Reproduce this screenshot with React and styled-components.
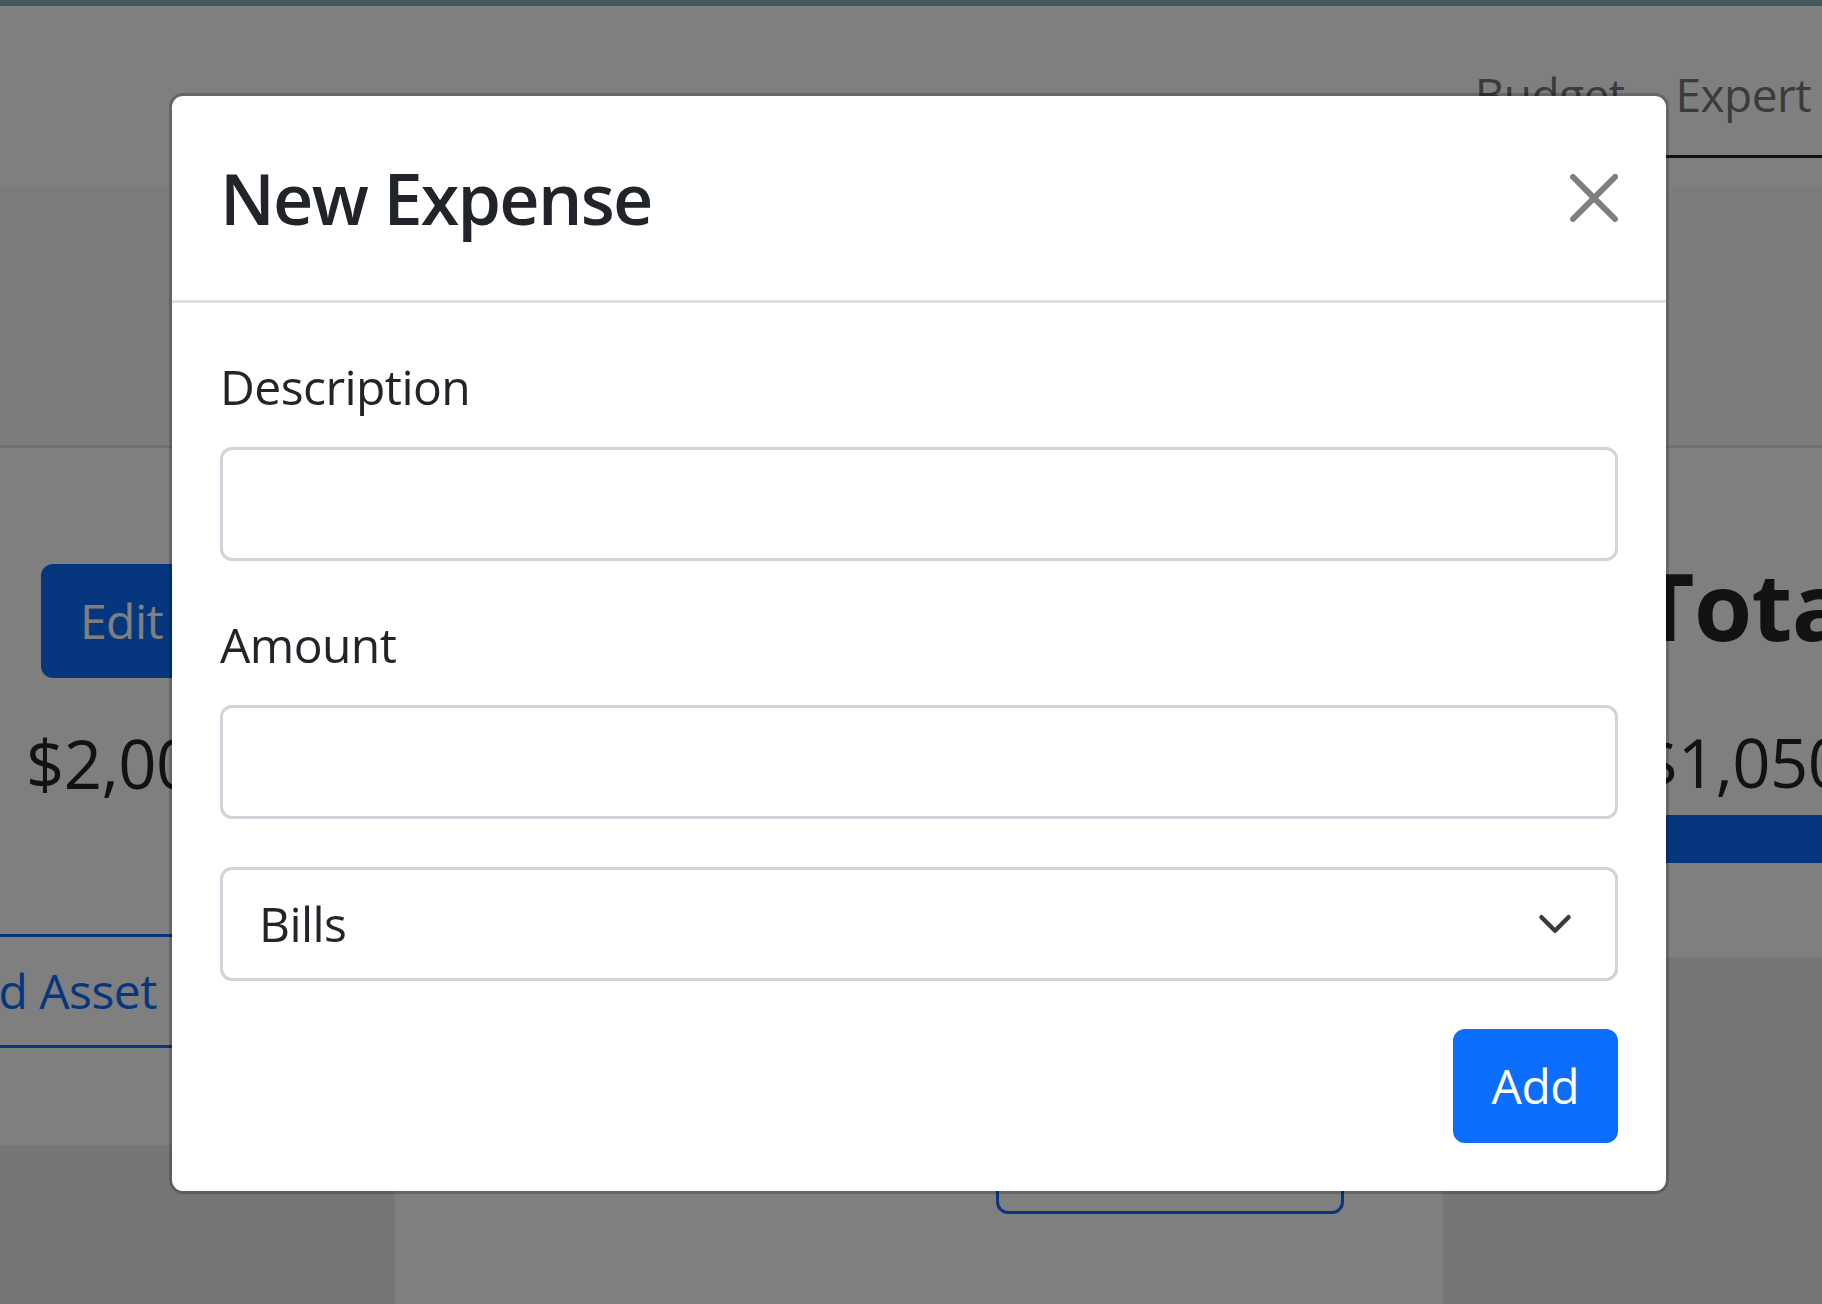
import React from "react";
import styled, { createGlobalStyle } from "styled-components";

const GlobalStyle = createGlobalStyle`
  html, body { margin: 0; padding: 0; }
  body {
    font-family: "Open Sans", "Noto Sans", sans-serif;
    background: #ececec;
    color: #212529;
    overflow: hidden;
    letter-spacing: -0.035em;
  }
  *, *::before, *::after { box-sizing: border-box; }
`;

/* ---------- background page ---------- */
const Page = styled.div`
  width: 1822px;
  height: 1304px;
  display: flex;
  flex-direction: column;
  overflow: hidden;
  background: #ececec;
`;

const TopStrip = styled.div`
  flex: none;
  height: 6px;
  background: #8aacbe;
`;

const Header = styled.header`
  flex: none;
  height: 180px;
  background: #fff;
  display: flex;
  justify-content: flex-end;
  align-items: flex-start;
`;

const Tabs = styled.nav`
  margin-top: 52px;
  display: flex;
  gap: 51px;
  padding: 0 11px 25px 0;
  border-bottom: 3px solid #222;
`;

const Tab = styled.a`
  font-size: 46px;
  line-height: 72px;
  color: #777;
  text-decoration: none;
`;

const Band = styled.div`
  flex: none;
  height: 262px;
  background: #f8f9fa;
  border-bottom: 3px solid #dedede;
`;

const Main = styled.main`
  flex: 1;
  display: grid;
  grid-template-columns: 395px 1048px 1fr;
  align-items: start;
`;

const Card = styled.section`
  background: #fff;
  height: ${(p) => p.$h}px;
  display: flex;
  flex-direction: column;
  align-items: flex-start;
  padding: ${(p) => p.$pad};
`;

const Btn = styled.button`
  font-family: inherit;
  letter-spacing: inherit;
  font-size: 48px;
  line-height: 72px;
  padding: 18px 36px;
  border-radius: 12px;
  border: 3px solid #0d6efd;
  background: ${(p) => (p.$outline ? "transparent" : "#0d6efd")};
  color: ${(p) => (p.$outline ? "#0d6efd" : "#fff")};
  white-space: nowrap;
  cursor: pointer;
  flex: none;
  margin: ${(p) => p.$m || "0"};
  ${(p) => (p.$w ? `width: ${p.$w}px;` : "")}
`;

const Money = styled.div`
  font-size: 67px;
  line-height: 88px;
  color: #212529;
  white-space: nowrap;
  margin: ${(p) => p.$m || "0"};
`;

const BigHeading = styled.h2`
  margin: 0;
  font-size: 94px;
  line-height: 113px;
  font-weight: 700;
  color: #212529;
  white-space: nowrap;
`;

const Progress = styled.div`
  align-self: stretch;
  margin: 9px -40px 0 0;
  height: 48px;
  background: #0d6efd;
`;

/* ---------- modal ---------- */
const Backdrop = styled.div`
  position: fixed;
  inset: 0;
  background: rgba(0, 0, 0, 0.5);
`;

const ModalLayer = styled.div`
  position: fixed;
  inset: 0;
  display: flex;
  align-items: flex-start;
  padding: 93px 0 0 169px;
`;

const Dialog = styled.div`
  flex: none;
  width: 1500px;
  background: #fff;
  background-clip: padding-box;
  border: 3px solid rgba(0, 0, 0, 0.2);
  border-radius: 14px;
  display: flex;
  flex-direction: column;
`;

const ModalHeader = styled.div`
  display: flex;
  align-items: center;
  justify-content: space-between;
  padding: 48px;
  border-bottom: 3px solid #dee2e6;
`;

const Title = styled.div`
  margin: 0;
  font-size: 70px;
  line-height: 108px;
  font-weight: 600;
  letter-spacing: -0.025em;
  color: #212529;
`;

const CloseButton = styled.button`
  box-sizing: content-box;
  width: 48px;
  height: 48px;
  padding: 24px;
  margin: -24px -24px -24px auto;
  border: 0;
  background: transparent;
  opacity: 0.5;
  display: flex;
  align-items: center;
  justify-content: center;
  cursor: pointer;
`;

const ModalBody = styled.div`
  padding: 48px;
`;

const Group = styled.div`
  margin-bottom: 48px;
`;

const Label = styled.label`
  display: block;
  margin-bottom: 24px;
  font-size: 48px;
  line-height: 72px;
  color: #212529;
`;

const Input = styled.input`
  display: block;
  width: 100%;
  height: 114px;
  padding: 18px 36px;
  font-family: inherit;
  letter-spacing: inherit;
  font-size: 48px;
  line-height: 72px;
  color: #212529;
  background: #fff;
  border: 3px solid #ced4da;
  border-radius: 12px;
  outline: none;
`;

const SelectWrap = styled.div`
  position: relative;
`;

const Select = styled.select`
  display: block;
  width: 100%;
  height: 114px;
  padding: 18px 108px 18px 36px;
  font-family: inherit;
  letter-spacing: inherit;
  font-size: 48px;
  line-height: 72px;
  color: #212529;
  background: #fff;
  border: 3px solid #ced4da;
  border-radius: 12px;
  outline: none;
  appearance: none;
  -webkit-appearance: none;
`;

const Chevron = styled.svg`
  position: absolute;
  right: 39px;
  top: 50%;
  transform: translateY(-50%);
  width: 48px;
  height: 36px;
  pointer-events: none;
`;

const Actions = styled.div`
  display: flex;
  justify-content: flex-end;
`;

export default function App() {
  return (
    <>
      <GlobalStyle />
      <Page>
        <TopStrip />
        <Header>
          <Tabs>
            <Tab>Budget</Tab>
            <Tab>Expert</Tab>
          </Tabs>
        </Header>
        <Band />
        <Main>
          <Card $h={697} $pad="116px 0 0 41px">
            <Btn>Edit</Btn>
            <Money $m="41px 0 0 -15px">$2,000</Money>
            <Btn $outline $m="127px 0 0 -140px">Add Asset</Btn>
          </Card>
          <Card $h={860} $pad="652px 0 0 601px">
            <Btn $outline $w={348}>Add Expense</Btn>
          </Card>
          <Card $h={509} $pad="101px 0 0 197px">
            <BigHeading>Total</BigHeading>
            <Money $m="56px 0 0 0">$1,050</Money>
            <Progress />
          </Card>
        </Main>
      </Page>

      <Backdrop />
      <ModalLayer>
        <Dialog role="dialog" aria-modal="true">
          <ModalHeader>
            <Title>New Expense</Title>
            <CloseButton aria-label="Close">
              <svg width="48" height="48" viewBox="0 0 16 16">
                <path
                  fill="#000"
                  d="M.293.293a1 1 0 0 1 1.414 0L8 6.586 14.293.293a1 1 0 1 1 1.414 1.414L9.414 8l6.293 6.293a1 1 0 0 1-1.414 1.414L8 9.414l-6.293 6.293a1 1 0 0 1-1.414-1.414L6.586 8 .293 1.707a1 1 0 0 1 0-1.414z"
                />
              </svg>
            </CloseButton>
          </ModalHeader>
          <ModalBody>
            <Group>
              <Label htmlFor="desc">Description</Label>
              <Input id="desc" type="text" />
            </Group>
            <Group>
              <Label htmlFor="amount">Amount</Label>
              <Input id="amount" type="number" />
            </Group>
            <Group>
              <SelectWrap>
                <Select defaultValue="Bills">
                  <option>Bills</option>
                  <option>Food</option>
                  <option>Entertainment</option>
                </Select>
                <Chevron viewBox="0 0 16 16">
                  <path
                    fill="none"
                    stroke="#343a40"
                    strokeLinecap="round"
                    strokeLinejoin="round"
                    strokeWidth="2"
                    d="m2 5 6 6 6-6"
                  />
                </Chevron>
              </SelectWrap>
            </Group>
            <Actions>
              <Btn>Add</Btn>
            </Actions>
          </ModalBody>
        </Dialog>
      </ModalLayer>
    </>
  );
}
